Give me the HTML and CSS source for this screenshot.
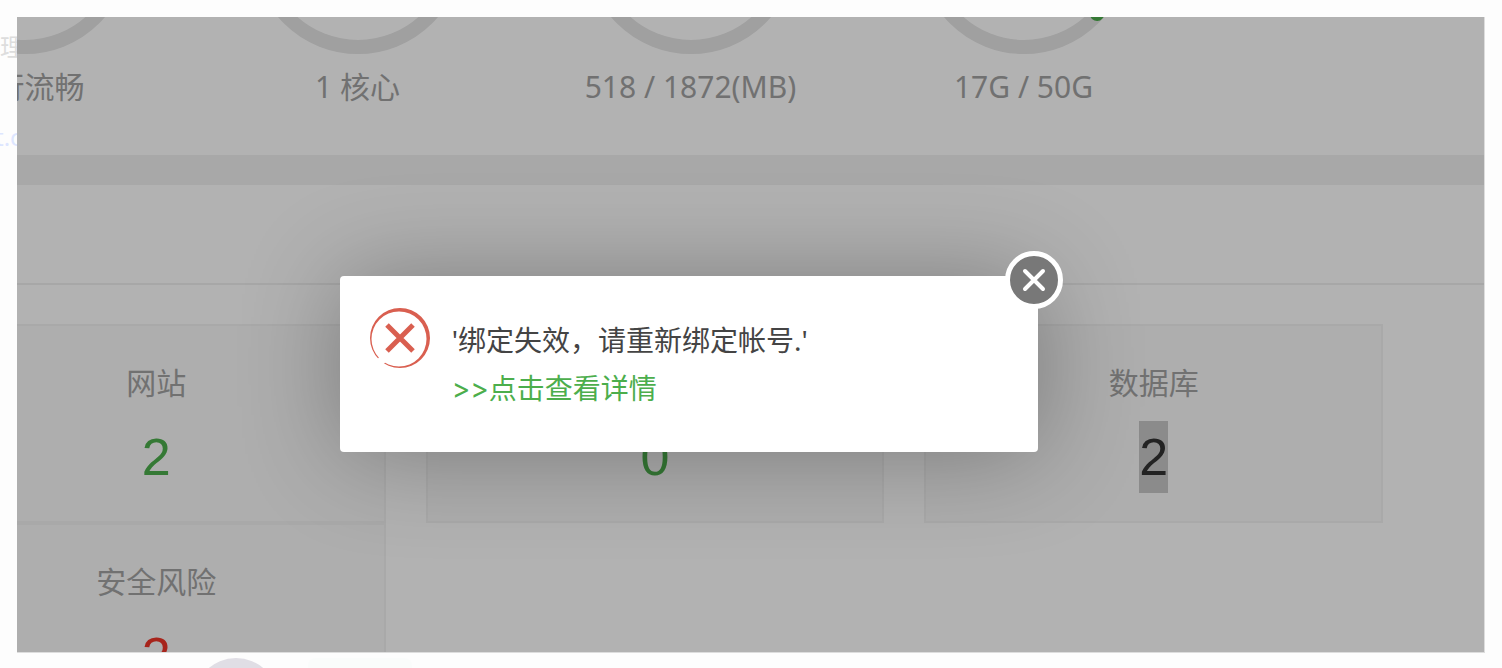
FILE: index.html
```html
<!DOCTYPE html>
<html lang="zh-CN">
<head>
    <meta charset="UTF-8">
    <meta name="viewport" content="width=device-width, initial-scale=1.0">
    <title>服务器面板</title>
    <link rel="stylesheet" href="styles.css">
</head>
<body>
    <aside class="rail">
        <p class="rail-text">理</p>
        <a class="rail-link" href="#">t.c</a>
    </aside>

    <main class="screen">
        <section class="gauges">
            <div class="gauge">
                <svg width="210" height="210" viewBox="0 0 210 210">
                    <circle class="track" cx="105" cy="105" r="98"/>
                </svg>
                <p class="label">运行流畅</p>
            </div>
            <div class="gauge">
                <svg width="210" height="210" viewBox="0 0 210 210">
                    <circle class="track" cx="105" cy="105" r="98"/>
                </svg>
                <p class="label">1 核心</p>
            </div>
            <div class="gauge">
                <svg width="210" height="210" viewBox="0 0 210 210">
                    <circle class="track" cx="105" cy="105" r="98"/>
                </svg>
                <p class="label">518 / 1872(MB)</p>
            </div>
            <div class="gauge">
                <svg width="210" height="210" viewBox="0 0 210 210">
                    <circle class="track" cx="105" cy="105" r="98"/>
                    <path class="value" d="M105 7A98 98 0 0 1 178 170"/>
                </svg>
                <p class="label">17G / 50G</p>
            </div>
        </section>

        <section class="overview">
            <div class="overview-head"></div>
            <div class="cards">
                <div class="card">
                    <p class="label">网站</p>
                    <a class="count" href="#">2</a>
                </div>
                <div class="card">
                    <p class="label"></p>
                    <a class="count" href="#">0</a>
                </div>
                <div class="card">
                    <p class="label">数据库</p>
                    <a class="count selected" href="#">2</a>
                </div>
                <div class="card">
                    <p class="label">安全风险</p>
                    <a class="count danger" href="#">2</a>
                </div>
            </div>
        </section>

        <div class="shade"></div>

        <div class="dialog" role="dialog">
            <svg class="dialog-icon" width="60" height="60" viewBox="0 0 60 60">
                <path class="ring" d="M30 0A30 30 0 1 1 30 60A30 30 0 1 1 30 0ZM29 3.500A27.500 27.500 0 1 0 29 58.500A27.500 27.500 0 1 0 29 3.500Z"/>
                <path class="gap" d="M18 46L6 58"/>
                <path class="cross" d="M17 17L43 43M43 17L17 43"/>
            </svg>
            <div class="dialog-body">
                <p>'绑定失效，请重新绑定帐号.'</p>
                <a href="#"><span class="arrows">&gt;&gt;</span>点击查看详情</a>
            </div>
            <button class="close" type="button" aria-label="关闭">
                <svg width="24" height="24" viewBox="0 0 24 24">
                    <path d="M3 3L21 21M21 3L3 21"/>
                </svg>
            </button>
        </div>
    </main>

    <footer class="bottom">
        <span class="avatar"></span>
        <span class="bubble"></span>
    </footer>
</body>
</html>
```
FILE: styles.css
```css
* {
    margin: 0;
    padding: 0;
    box-sizing: border-box;
}

body {
    display: grid;
    grid-template-columns: 17px 1fr;
    grid-template-rows: 1fr 15px;
    height: 100vh;
    padding: 17px 17px 0 0;
    overflow: hidden;
    background-color: #fdfdfd;
    font-family: "Noto Sans", "Noto Sans CJK SC", sans-serif;
}

a {
    text-decoration: none;
}

/* strip of the page behind */
.rail {
    overflow: hidden;
    padding-top: 16px;
    font-size: 24px;
    line-height: 28px;
    white-space: nowrap;
}

.rail-text {
    color: #ddd;
}

.rail-link {
    display: block;
    margin: 62px 0 0 -5px;
    color: #dde6ff;
}

.screen {
    position: relative;
    overflow: hidden;
    background-color: #fff;
    border-right: 1px solid #ddd;
    border-bottom: 1px solid #ddd;
}

.label {
    min-height: 40px;
    color: #a3a3a3;
    font-size: 30px;
    line-height: 40px;
    text-align: center;
    white-space: nowrap;
}

/* gauges */
.gauges {
    display: grid;
    grid-template-columns: repeat(4, 1fr);
    margin: -173px 294px 0 -159px;
    padding-bottom: 48px;
}

.gauge {
    display: flex;
    flex-direction: column;
    align-items: center;
    gap: 13px;
}

.track {
    fill: none;
    stroke: #e5e5e5;
    stroke-width: 14;
}

.value {
    fill: none;
    stroke: #4cae4c;
    stroke-width: 14;
    stroke-linecap: round;
}

/* overview */
.overview {
    border-top: 30px solid #f1f1f1;
}

.overview-head {
    height: 100px;
    border-bottom: 2px solid #f0f0f0;
}

.cards {
    display: grid;
    grid-template-columns: repeat(3, 1fr);
    column-gap: 40px;
    margin: 39px 101px 0 -90px;
}

.card {
    display: flex;
    flex-direction: column;
    align-items: center;
    gap: 18px;
    padding: 37px 0 28px;
    background-color: #f9f9f9;
    border: 2px solid #f2f2f2;
}

.count {
    color: #4cae4c;
    font-family: "Liberation Sans", sans-serif;
    font-size: 52px;
    line-height: 72px;
}

.count.selected {
    color: #333;
    background-color: #c8c8c8;
}

.count.danger {
    color: #f03428;
}

/* dialog */
.shade {
    position: absolute;
    inset: 0;
    background-color: rgba(0, 0, 0, 0.3);
}

.dialog {
    position: absolute;
    top: 259px;
    left: 22%;
    display: flex;
    gap: 22px;
    width: 698px;
    padding: 32px 30px 39px;
    background-color: #fff;
    border-radius: 4px;
    box-shadow: 2px 2px 100px rgba(0, 0, 0, 0.3);
}

.dialog-icon {
    flex: none;
}

.ring {
    fill: #d95f50;
    fill-rule: evenodd;
}

.gap {
    stroke: #fff;
    stroke-width: 8;
}

.cross {
    fill: none;
    stroke: #d95f50;
    stroke-width: 5;
}

.dialog-body {
    padding-top: 8px;
    color: #444;
    font-size: 28px;
    line-height: 48px;
}

.dialog-body a {
    display: block;
    color: #4cae4c;
}

.arrows {
    font-family: Inter, sans-serif;
}

.close {
    position: absolute;
    top: -25px;
    right: -25px;
    display: flex;
    align-items: center;
    justify-content: center;
    width: 58px;
    height: 58px;
    background-color: #787878;
    border: 5px solid #fff;
    border-radius: 50%;
    cursor: pointer;
}

.close path {
    fill: none;
    stroke: #fff;
    stroke-width: 4;
    stroke-linecap: round;
}

/* page behind, lower edge */
.bottom {
    grid-column: 1 / -1;
    display: flex;
    gap: 30px;
    padding: 5px 0 0 194px;
    overflow: hidden;
}

.avatar {
    flex: none;
    width: 84px;
    height: 84px;
    background-color: #e0dee5;
    border-radius: 50%;
}

.bubble {
    width: 104px;
    height: 84px;
    background-color: #fafcfb;
    border-radius: 8px;
}
```
